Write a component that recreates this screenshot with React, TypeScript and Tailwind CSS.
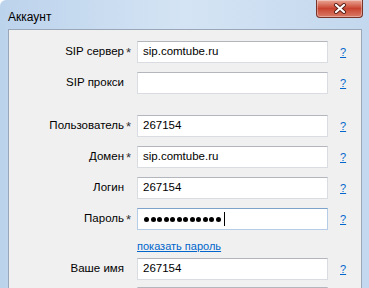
import React from "react";

const rows1 = [
  { label: "SIP сервер", req: true, value: "sip.comtube.ru" },
  { label: "SIP прокси", req: false, value: "" },
];

const rows2 = [
  { label: "Пользователь", req: true, value: "267154" },
  { label: "Домен", req: true, value: "sip.comtube.ru" },
  { label: "Логин", req: false, value: "267154" },
];

function Help() {
  return (
    <a className="ml-[12px] text-[11px] leading-none text-[#0066cc] underline cursor-pointer">?</a>
  );
}

function Row({
  label,
  req,
  children,
  focused,
  noHelp,
}: {
  label: string;
  req?: boolean;
  children?: React.ReactNode;
  focused?: boolean;
  noHelp?: boolean;
}) {
  return (
    <div className="flex items-center h-[22px]">
      <div className="w-[115px] text-right text-[11.5px] text-black">{label}</div>
      <div className="w-[13px] pl-[2px] self-start pt-[5px] text-[13px] leading-none text-[#333]">
        {req ? "*" : ""}
      </div>
      <div
        className={
          "w-[191px] h-[22px] bg-white border flex items-center px-[5px] text-[11.5px] text-black " +
          (focused
            ? "border-[#b5cde6] border-t-[#7ea3cb]"
            : "border-[#d9dce1] border-t-[#b3b6bc]")
        }
      >
        {children}
      </div>
      {!noHelp && <Help />}
    </div>
  );
}

export default function App() {
  return (
    <div
      className="w-[369px] h-[288px] overflow-hidden bg-white"
      style={{ fontFamily: '"Liberation Sans", Arial, sans-serif' }}
    >
      <div className="w-full h-full rounded-tl-[6px] bg-gradient-to-r from-[#bcd3ec] via-[#d4e4f4] to-[#c3d8ee] flex flex-col">
        {/* title bar */}
        <div className="h-[29px] flex items-start justify-between shrink-0">
          <div className="pl-[8px] pt-[8px] text-[12px] text-black">Аккаунт</div>
          <div className="mr-[6px] w-[47px] h-[18px] rounded-b-[4px] border border-t-0 border-[#7a3329] bg-gradient-to-b from-[#e9a596] via-[#c8432f] to-[#d87a66] flex items-center justify-center shadow-[inset_0_0_0_1px_rgba(255,255,255,0.35)]">
            <svg width="14" height="11" viewBox="0 0 14 11">
              <path d="M3 2 L11 9 M11 2 L3 9" stroke="#5a1d15" strokeWidth="4" strokeLinecap="round" />
              <path d="M3 2 L11 9 M11 2 L3 9" stroke="#ffffff" strokeWidth="2.2" strokeLinecap="round" />
            </svg>
          </div>
        </div>

        {/* client area */}
        <div className="ml-[8px] mr-[7px] flex-1 border border-[#9aa7b8] bg-[#f0f0f0] pt-[11px] flex flex-col">
          <div className="flex flex-col gap-[9px]">
            {rows1.map((r) => (
              <Row key={r.label} label={r.label} req={r.req}>
                {r.value}
              </Row>
            ))}
          </div>
          <div className="flex flex-col gap-[9px] mt-[21px]">
            {rows2.map((r) => (
              <Row key={r.label} label={r.label} req={r.req}>
                {r.value}
              </Row>
            ))}
            <Row label="Пароль" req focused>
              <div className="flex items-center gap-[1.5px] pl-[1px]">
                {Array.from({ length: 12 }).map((_, i) => (
                  <span key={i} className="w-[5px] h-[5px] rounded-full bg-black" />
                ))}
                <span className="ml-[2px] w-[1px] h-[14px] bg-black" />
              </div>
            </Row>
          </div>
          <div className="pl-[128px] mt-[3px] h-[14px]">
            <a className="text-[11px] text-[#0066cc] underline cursor-pointer">показать пароль</a>
          </div>
          <div className="flex flex-col gap-[7px] mt-[11px]">
            <Row label="Ваше имя">267154</Row>
            <Row label="" noHelp />
          </div>
        </div>
      </div>
    </div>
  );
}
